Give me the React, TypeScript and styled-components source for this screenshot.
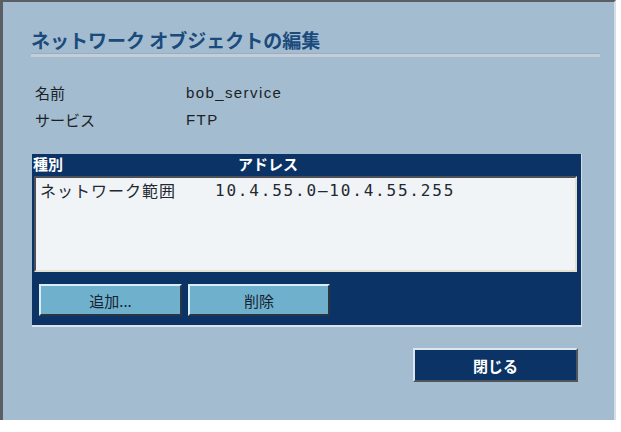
import React from 'react'
import styled, { createGlobalStyle } from 'styled-components'

const colors = {
  panel: '#a3bccf',
  navy: '#0b3366',
  title: '#1b4a7d',
  text: '#1b1f26',
  list: '#f1f4f7',
  button: '#6fb1cd',
  frameDark: '#5a5f66',
}

const jp = `"Noto Sans CJK JP", "Liberation Sans", sans-serif`

const GlobalStyle = createGlobalStyle`
  body {
    margin: 0;
    background: #ffffff;
    font-family: ${jp};
  }
`

const rows = [
  { label: '名前', value: 'bob_service' },
  { label: 'サービス', value: 'FTP' },
]

const entries = [{ kind: 'ネットワーク範囲', address: '10.4.55.0–10.4.55.255' }]

export default function App() {
  return (
    <>
      <GlobalStyle />
      <Panel>
        <Title>ネットワーク オブジェクトの編集</Title>

        <InfoGrid>
          {rows.map((r) => (
            <React.Fragment key={r.label}>
              <InfoLabel>{r.label}</InfoLabel>
              <InfoValue>{r.value}</InfoValue>
            </React.Fragment>
          ))}
        </InfoGrid>

        <TableFrame>
          <HeaderRow>
            <HeaderCell $width={205}>種別</HeaderCell>
            <HeaderCell>アドレス</HeaderCell>
          </HeaderRow>
          <ListBox>
            {entries.map((e) => (
              <ListRow key={e.address}>
                <KindCell>{e.kind}</KindCell>
                <AddressCell>{e.address}</AddressCell>
              </ListRow>
            ))}
          </ListBox>
          <ButtonBand>
            <ListButton $width={143}>追加...</ListButton>
            <ListButton $width={142}>削除</ListButton>
          </ButtonBand>
        </TableFrame>

        <Footer>
          <CloseButton>閉じる</CloseButton>
        </Footer>
      </Panel>
    </>
  )
}

const Panel = styled.div`
  width: 616px;
  height: 420px;
  box-sizing: border-box;
  background: ${colors.panel};
  border-top: 2px solid ${colors.frameDark};
  border-left: 3px solid ${colors.frameDark};
  border-right: 2px solid #d6dfe6;
  padding: 26px 14px 0 28px;
  display: flex;
  flex-direction: column;
`

const Title = styled.div`
  font-family: ${jp};
  font-size: 19px;
  line-height: 24px;
  font-weight: 700;
  color: ${colors.title};
  padding-bottom: 2px;
  border-bottom: 3px solid #c3ced8;
  box-shadow: 0 -1px 0 #98adbf inset;
`

const InfoGrid = styled.div`
  display: grid;
  grid-template-columns: 151px 1fr;
  grid-auto-rows: 27px;
  align-items: center;
  margin-top: 22px;
  padding-left: 4px;
`

const InfoLabel = styled.div`
  font-family: ${jp};
  font-size: 15px;
  color: ${colors.text};
`

const InfoValue = styled.div`
  font-family: "Liberation Sans", Arial, sans-serif;
  font-size: 15px;
  letter-spacing: 1.4px;
  color: ${colors.text};
`

const TableFrame = styled.div`
  width: 549px;
  margin: 21px 0 0 1px;
  background: ${colors.navy};
  border-right: 1px solid #d3dde5;
  border-bottom: 2px solid #dbe4eb;
  display: flex;
  flex-direction: column;
`

const HeaderRow = styled.div`
  display: flex;
  height: 19px;
  align-items: center;
  padding-left: 1px;
`

const HeaderCell = styled.div<{ $width?: number }>`
  width: ${(p) => (p.$width ? `${p.$width}px` : 'auto')};
  font-family: ${jp};
  font-size: 15px;
  font-weight: 700;
  color: #ffffff;
  line-height: 19px;
`

const ListBox = styled.div`
  height: 96px;
  box-sizing: border-box;
  margin: 3px 4px 0 2px;
  background: ${colors.list};
  border-top: 2px solid #4d5157;
  border-left: 2px solid #4d5157;
  border-bottom: 2px solid #e6e0d2;
  border-right: 2px solid #e6e0d2;
  padding: 1px 4px;
`

const ListRow = styled.div`
  display: flex;
  align-items: center;
  height: 22px;
  color: #222831;
`

const KindCell = styled.div`
  width: 175px;
  font-family: ${jp};
  font-size: 16px;
  letter-spacing: 1px;
`

const AddressCell = styled.div`
  font-family: "DejaVu Sans Mono", "Liberation Mono", monospace;
  font-size: 16px;
  letter-spacing: 1.8px;
`

const ButtonBand = styled.div`
  display: flex;
  gap: 6px;
  padding: 12px 0 9px 7px;
`

const ListButton = styled.button<{ $width: number }>`
  width: ${(p) => p.$width}px;
  height: 32px;
  box-sizing: border-box;
  background: ${colors.button};
  border-top: 2px solid #d9eef6;
  border-left: 2px solid #d9eef6;
  border-bottom: 2px solid #2a3544;
  border-right: 2px solid #2a3544;
  font-family: ${jp};
  font-size: 15px;
  color: #16222f;
  padding: 0;
  cursor: pointer;
`

const Footer = styled.div`
  display: flex;
  justify-content: flex-end;
  margin-top: 21px;
  padding-right: 22px;
`

const CloseButton = styled.button`
  width: 165px;
  height: 34px;
  box-sizing: border-box;
  background: ${colors.navy};
  border-top: 2px solid #dbe6ee;
  border-left: 2px solid #dbe6ee;
  border-bottom: 2px solid #50555c;
  border-right: 2px solid #50555c;
  font-family: ${jp};
  font-size: 15px;
  font-weight: 700;
  color: #ffffff;
  padding: 0;
  cursor: pointer;
`
